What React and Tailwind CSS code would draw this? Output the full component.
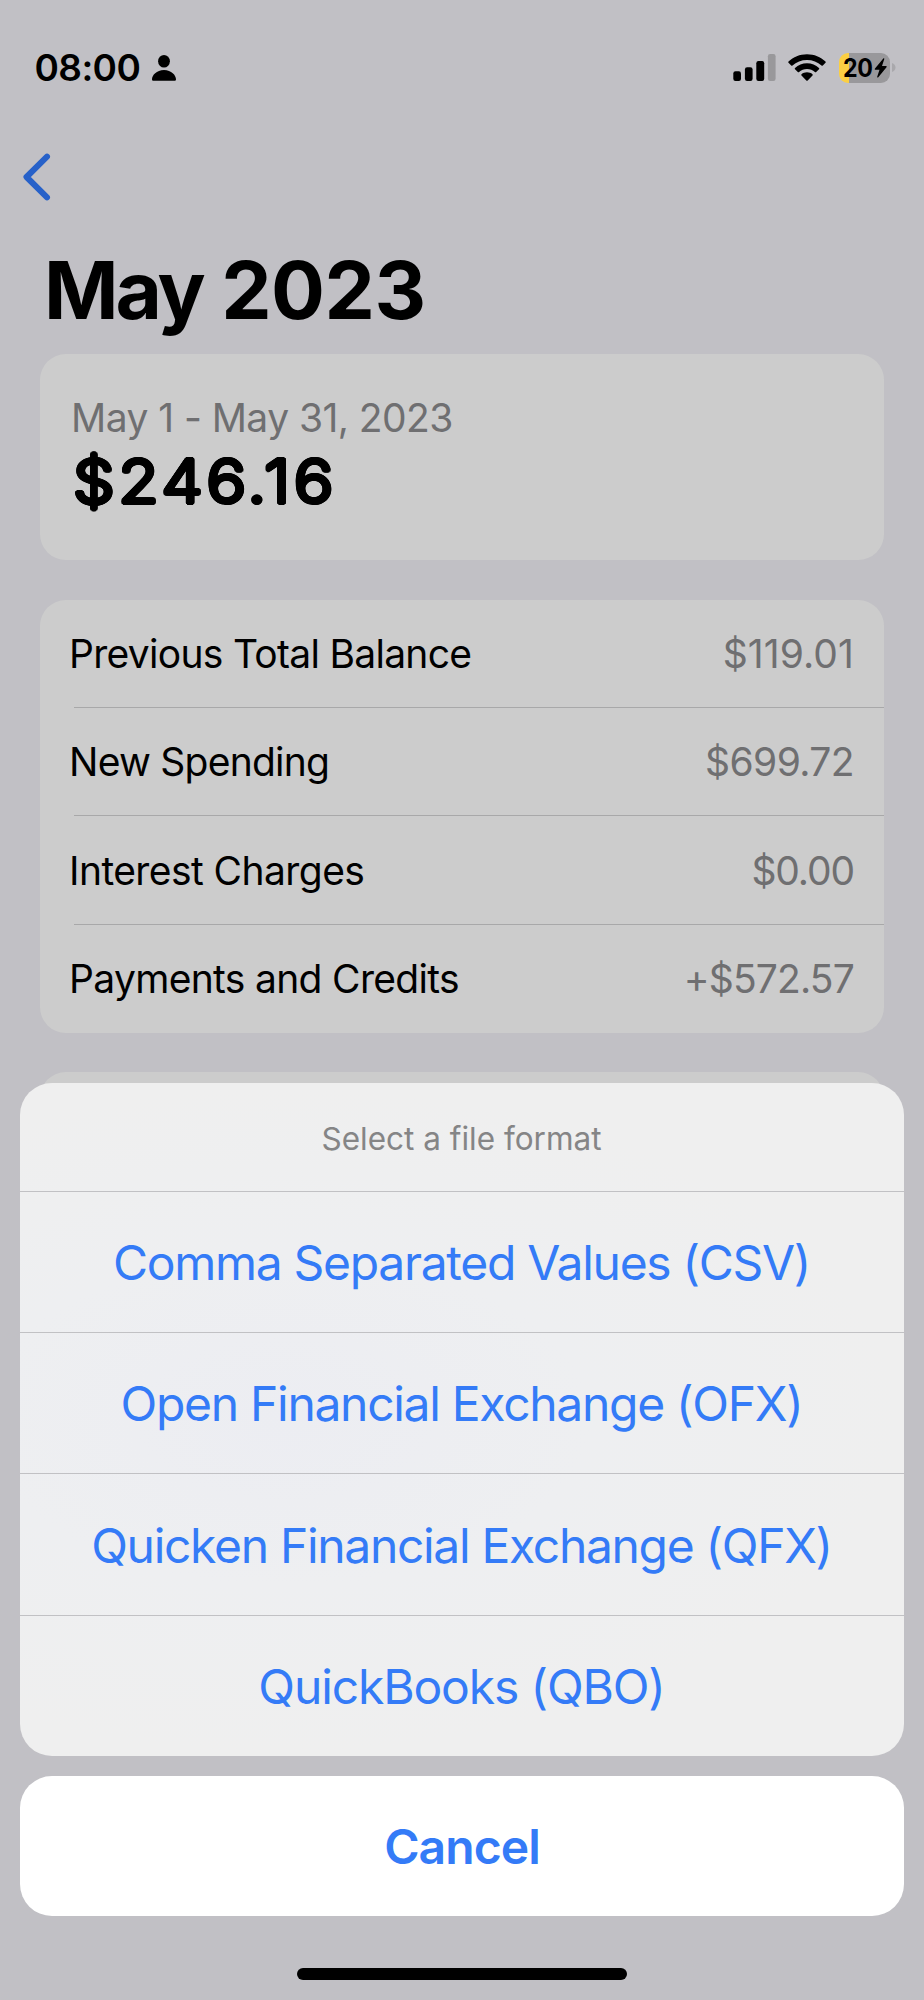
const rows = [
  { label: "Previous Total Balance", value: "$119.01", labelCls: "tracking-[-0.71px]", valueCls: "tracking-[0.1px]", rowCls: "h-[108px] border-b" },
  { label: "New Spending", value: "$699.72", labelCls: "tracking-[-0.75px]", valueCls: "tracking-[-0.6px]", rowCls: "h-[108px] border-b" },
  { label: "Interest Charges", value: "$0.00", labelCls: "tracking-[-0.57px]", valueCls: "tracking-[-1.1px]", rowCls: "h-[109px] border-b pt-[2px]" },
  { label: "Payments and Credits", value: "+$572.57", labelCls: "tracking-[-0.67px]", valueCls: "tracking-[-0.83px]", rowCls: "h-[108px]" },
];

const formats = [
  { label: "Comma Separated Values (CSV)", cls: "h-[141px] tracking-[-1.3px]" },
  { label: "Open Financial Exchange (OFX)", cls: "h-[141px] tracking-[-1.3px]" },
  { label: "Quicken Financial Exchange (QFX)", cls: "h-[142px] tracking-[-1.32px]" },
  { label: "QuickBooks (QBO)", cls: "h-[141px] tracking-[-1.13px]" },
];

function PersonIcon() {
  return (
    <svg className="h-[28px] w-[24px]" viewBox="0 0 24 28">
      <ellipse cx="12" cy="7.2" rx="5.9" ry="6.3" />
      <path d="M1.6 26.8C.6 26.8 0 26.1 0 25.2C0 21.4 4.6 16 12 16S24 21.4 24 25.2c0 .9-.6 1.6-1.6 1.6Z" />
    </svg>
  );
}

function SignalIcon() {
  return (
    <svg className="h-[28px] w-[43px]" viewBox="0 0 43 28">
      <rect x="0.3" y="17.3" width="7.7" height="9.7" rx="2.2" />
      <rect x="11.9" y="13.2" width="7.7" height="13.8" rx="2.2" />
      <rect x="23.3" y="7" width="7.9" height="20" rx="2.2" />
      <rect x="34.9" y="0" width="7.7" height="27" rx="2.2" fill="#99989b" />
    </svg>
  );
}

function WifiIcon() {
  return (
    <svg className="h-[28px] w-[38px]" viewBox="0 0 38 28">
      <path d="M19 0.2C26.2 0.2 32.7 3 37.5 7.5c.4.4.4.9 0 1.3l-2.7 2.7c-.4.4-.9.4-1.3 0C29.7 8 24.6 6 19 6S8.3 8 4.5 11.5c-.4.4-.9.4-1.3 0L.5 8.8c-.4-.4-.4-.9 0-1.3C5.3 3 11.8.2 19 .2Z" />
      <path d="M19 9.3c4.6 0 8.8 1.7 12 4.6.4.4.4.9 0 1.3l-2.8 2.8c-.4.4-.9.4-1.3 0-2.1-1.9-4.9-3-7.9-3s-5.8 1.1-7.9 3c-.4.4-.9.4-1.3 0L7 15.2c-.4-.4-.4-.9 0-1.3 3.2-2.9 7.4-4.6 12-4.6Z" />
      <path d="M19 18.3c2.1 0 4 .7 5.5 1.9.4.4.4.9 0 1.3l-4.8 5c-.4.4-1 .4-1.4 0l-4.8-5c-.4-.4-.4-.9 0-1.3 1.5-1.2 3.4-1.9 5.5-1.9Z" />
    </svg>
  );
}

function Battery() {
  return (
    <div className="flex items-center gap-[2px]">
      <div className="flex h-[30px] w-[51px] items-center overflow-hidden rounded-[9px] bg-[linear-gradient(90deg,#fbcf43_10px,#99989b_10px)] pl-[4px]">
        <span className="inline-block w-[31px] origin-left scale-x-[0.93] text-[25px] leading-[30px] font-bold tracking-[-0.3px]">20</span>
        <svg className="h-[20px] w-[13px]" viewBox="0 0 13 20">
          <path d="M9.3.4 1 10.6c-.5.6-.2 1.2.5 1.2h4L3.2 18.8c-.2.7.6 1.1 1.1.5L12.5 9.2c.5-.6.2-1.2-.5-1.2H8L10.3.9c.2-.7-.5-1-1-.5Z" />
        </svg>
      </div>
      <svg className="h-[9px] w-[4px]" viewBox="0 0 4 9">
        <path d="M0 0c2.2.6 3.5 2.3 3.5 4.5S2.2 8.4 0 9Z" fill="#a9a8ac" />
      </svg>
    </div>
  );
}

export default function App() {
  return (
    <div className="relative h-[2000px] w-[924px] overflow-hidden bg-[#c1c0c5] font-[Inter,sans-serif] text-black">
      <header className="flex h-[135px] items-center justify-between pr-[28px] pl-[34.5px]">
        <div className="flex items-center gap-[12px]">
          <span className="w-[105px] text-[37px] leading-[40px] font-[560] tracking-[-0.6px] whitespace-nowrap">08:00</span>
          <PersonIcon />
        </div>
        <div className="flex items-center gap-[13px]">
          <div className="-mr-[1px]">
            <SignalIcon />
          </div>
          <WifiIcon />
          <Battery />
        </div>
      </header>

      <nav className="flex h-[90px] items-center pl-[21px]">
        <svg className="h-[50px] w-[30px] overflow-visible" viewBox="0 0 30 50" fill="none" stroke="#2761c9" strokeWidth="6" strokeLinecap="round" strokeLinejoin="round">
          <path d="M26 1.7 5.5 22 26 42.3" />
        </svg>
      </nav>

      <main className="px-[40px]">
        <h1 className="mt-[15px] ml-[4px] h-[100px] text-[80px] leading-[100px] font-bold tracking-[-0.5px]">
          <span className="tracking-[-3px]">May</span> 2023
        </h1>

        <section className="mt-[14px] h-[206px] rounded-[26px] bg-[#ccc] pt-[39px] pl-[31px]">
          <p className="h-[50px] text-[39px] leading-[50px] tracking-[-0.56px] text-[#6f6f71]">May 1 - May 31, 2023</p>
          <p className="ml-[2px] h-[76px] w-[300px] origin-left scale-x-[1.08] text-[61px] leading-[76px] font-light tracking-[3.4px] [text-shadow:2px_0_#000,1.85px_.77px_#000,1.41px_1.41px_#000,.77px_1.85px_#000,0_2px_#000,-.77px_1.85px_#000,-1.41px_1.41px_#000,-1.85px_.77px_#000,-2px_0_#000,-1.85px_-.77px_#000,-1.41px_-1.41px_#000,-.77px_-1.85px_#000,0_-2px_#000,.77px_-1.85px_#000,1.41px_-1.41px_#000,1.85px_-.77px_#000]">$246.16</p>
        </section>

        <section className="mt-[40px] rounded-[26px] bg-[#ccc]">
          {rows.map((row) => (
            <div key={row.label} className="pl-[34px]">
              <div className={`flex items-center justify-between border-[#a8a8a9] pr-[30px] text-[39px] leading-[50px] ${row.rowCls}`}>
                <span className={`-ml-[5px] ${row.labelCls}`}>{row.label}</span>
                <span className={`text-[#6f6f71] ${row.valueCls}`}>{row.value}</span>
              </div>
            </div>
          ))}
        </section>

        <section className="mt-[39px] h-[200px] rounded-[26px] bg-[#ccc]" />
      </main>

      <div className="absolute inset-x-0 bottom-0 flex flex-col items-center px-[20px] pb-[20px]">
        <div className="w-full overflow-hidden rounded-[32px] bg-[#efeff0] bg-[radial-gradient(ellipse_at_30%_50%,#ecedf2_0%,#eeeff1_35%,#efefef_70%)]">
          <p className="flex h-[108px] items-center justify-center pt-[3px] pr-[1px] text-[31.5px] leading-[40px] text-[#858586]">Select a file format</p>
          {formats.map((format) => (
            <button key={format.label} className={`flex w-full items-center justify-center border-t border-[#c1c1c4] pt-[2px] pr-[1px] text-[48px] leading-[60px] text-[#347bf7] ${format.cls}`}>
              {format.label}
            </button>
          ))}
        </div>
        <button className="mt-[20px] h-[140px] w-full rounded-[32px] bg-white pt-[1px] text-[48px] leading-[60px] font-semibold tracking-[-0.93px] text-[#347bf7]">Cancel</button>
        <div className="mt-[52px] h-[12px] w-[330px] rounded-full bg-black" />
      </div>
    </div>
  );
}
